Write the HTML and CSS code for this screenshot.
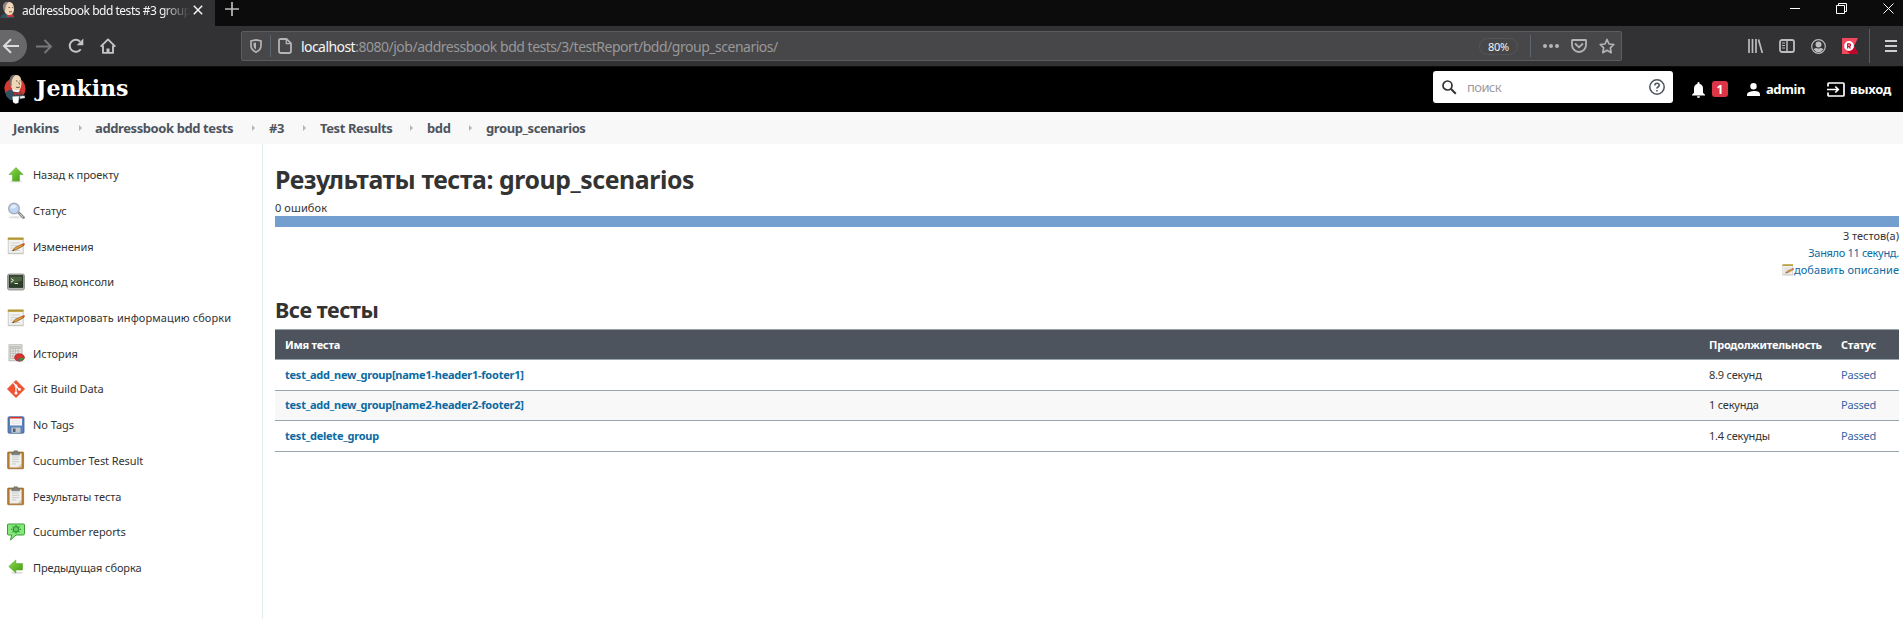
FILE: index.html
```html
<!DOCTYPE html>
<html lang="ru">
<head>
<meta charset="utf-8">
<title>addressbook bdd tests #3 group_scenarios [Jenkins]</title>
<link rel="stylesheet" href="styles.css">
</head>
<body>
<svg class="defs" width="0" height="0">
  <defs>
    <linearGradient id="green" x1="0" y1="0" x2="1" y2="1"><stop offset="0" stop-color="#8fdc4c"/><stop offset="1" stop-color="#3f9a12"/></linearGradient>
    <symbol id="butler" viewBox="0 0 22 30">
      <ellipse cx="11" cy="14.500" rx="10.600" ry="10.500" fill="#d33833"/>
      <path d="M2 18q3-3 7-2l7 1 3 4-2 4-5 1.500-6-.5-4-4z" fill="#335061"/>
      <path d="M6.500 7Q6.500 1 12 1q4.500 0 5.200 5 .9 4-.3 7.500-1 3-4.200 3Q8 17 6.500 11z" fill="#f0d6b7"/>
      <path d="M12 .8Q6 .2 5.400 6q-.8 3 1 5.500l1.300.8-.2-4Q8.300 3 12 .8z" fill="#6d6b6d"/>
      <path d="M8 14.500q3 3 8 1l-1 3-6-1z" fill="#fff"/>
      <path d="M10 18l2.500 1 4-1.300.3 3.200-3.600-.9-2.800 1.200z" fill="#d33833" stroke="#81201d" stroke-width=".4"/>
      <path d="M8.500 22.500l6.500-.3-.6 6.800-3 .8-2.400-1.500z" fill="#fff"/>
      <path d="M15.500 22.500l5-1 .5 2.500-4.500.8z" fill="#e8e8e8"/>
      <path d="M12 7h1.500M15.500 7h1M14.800 8.200l.8 2.500M12 13.200q2 .8 4-.3" fill="none" stroke="#4a3728" stroke-width=".8"/>
    </symbol>
    <symbol id="notepad" viewBox="0 0 18 18">
      <path d="M1 15.500h15.500l.3 1.700H.7z" fill="#cfcfcb"/>
      <rect x="1.200" y="1.500" width="15" height="14.700" fill="#f2f2ef" stroke="#c2c2bc" stroke-width=".8"/>
      <path d="M.8.500h15.700v2.300H.8z" fill="#b5942d"/>
      <path d="M3.500 6h9M3.500 8.500h7M3.500 11h4M3.500 13.500h9" stroke="#c8c8c4" stroke-width=".8"/>
      <path d="M5.500 13.600l2.600-3.200 7.200-3.400 1.100 2-7.200 3.700z" fill="#dc923b" stroke="#85591f" stroke-width=".6"/>
      <path d="M15.200 7l2.100-1 .5 1.800-1.500 1.100z" fill="#dc3a2c"/>
      <path d="M5.200 13.900l1.100-1.500 1 .9z" fill="#333"/>
    </symbol>
    <symbol id="clipboard" viewBox="0 0 18 20">
      <rect x=".6" y="2" width="16" height="16.800" rx=".8" fill="#b67a30" stroke="#8d5b1d" stroke-width=".6"/>
      <path d="M2.600 3.600h12v10.400l-3.600 3.600H2.600z" fill="#eeeeec"/>
      <path d="M14.600 14l-3.600 3.600h3.600z" fill="#d0d0cc"/>
      <path d="M5 7h7M5 9.300h7M5 11.600h7M5 13.900h4" stroke="#cacac7" stroke-width=".9"/>
      <path d="M4.800 4.800V2.300H7V.8h3.400v1.500h2.200v2.500z" fill="#7d817b" stroke="#5f625d" stroke-width=".5"/>
    </symbol>
  </defs>
</svg>

<div class="tabs">
  <div class="tab">
    <svg class="tab-icon" viewBox="0 0 16 17"><path d="M1.500 14l5-2 6 1.500L15 17H0z" fill="#335061"/><path d="M4 6Q4 1 9 1q4 0 4.700 4.500.8 3-.4 6-1 2.700-3.800 2.700Q5 14 4 9z" fill="#f0d6b7"/><path d="M9.500.800Q3 0 2.800 5.500q0 3.500 2.200 5l.4-3.500Q6 2.500 9.500.800z" fill="#8a8582"/><path d="M6.500 14.200l7-.7v2.800l-3-.8-3 1z" fill="#d33833"/><path d="M8.500 6.500H10M12 6.500h1M9 10.800h3" stroke="#5b4433" stroke-width=".8"/></svg>
    <span class="tab-title">addressbook bdd tests #3 group</span>
    <svg class="tab-close" viewBox="0 0 10 10"><path d="M.8.800l8.400 8.400M9.200.800L.8 9.200" stroke="#f4f4f4" stroke-width="1.500"/></svg>
  </div>
  <svg class="plus" viewBox="0 0 14 14"><path d="M7 0v14M0 7h14" stroke="#bcbcbc" stroke-width="1.700"/></svg>
  <div class="window">
    <svg width="10" height="11" viewBox="0 0 10 11"><path d="M0 5.500h10" stroke="#fff"/></svg>
    <svg width="11" height="11" viewBox="0 0 11 11" fill="none" stroke="#fff"><path d="M.5 2.500h8v8h-8zM2.500 2.500v-2h8v8h-2"/></svg>
    <svg width="11" height="11" viewBox="0 0 11 11"><path d="M.5.500l10 10M10.500.500l-10 10" stroke="#fff"/></svg>
  </div>
</div>

<div class="nav">
  <div class="back"><svg width="18" height="16" viewBox="0 0 18 16" fill="none" stroke="#dcdcdc" stroke-width="2"><path d="M17 8H2M9 1.300L2 8l7 6.700"/></svg></div>
  <svg class="forward" width="17" height="15" viewBox="0 0 17 15" fill="none" stroke="#77777a" stroke-width="1.900"><path d="M0 7.500h15M8.500 1l6.500 6.500L8.500 14"/></svg>
  <svg class="reload" width="16" height="16" viewBox="0 0 16 16"><path d="M12.700 11.200A6 6 0 1 1 12 3.600" fill="none" stroke="#c4c4c6" stroke-width="2"/><path d="M15.300.600v6.600H8.700z" fill="#c4c4c6"/></svg>
  <svg class="home" width="16" height="16" viewBox="0 0 16 16" fill="none" stroke="#c4c4c6" stroke-width="1.900"><path d="M.7 8.600L8 1.400l7.300 7.200M3 7.500v7.400h10V7.500" stroke-linejoin="round"/><path d="M8 15v-4.500" stroke-width="3"/></svg>
  <div class="urlbar">
    <svg class="shield" width="12" height="14" viewBox="0 0 12 14"><path d="M6 .9L11 2v4.500q0 4.500-5 6.600Q1 11 1 6.500V2z" fill="none" stroke="#b4b4b6" stroke-width="1.700"/><path d="M6 3.600v6.800Q3.500 9 3.500 6.500V4z" fill="#b4b4b6"/></svg>
    <i class="bar"></i>
    <svg class="page" width="14" height="16" viewBox="0 0 14 16" fill="none" stroke="#b4b4b6" stroke-width="1.800"><path d="M2.500 1h6L13 5.300V13q0 2-2 2H3q-2 0-2-2V2.500Q1 1 2.500 1z"/><path d="M8.300 1v4.600H13" stroke-width="1.300"/></svg>
    <span class="url"><b>localhost</b>:8080/job/addressbook bdd tests/3/testReport/bdd/group_scenarios/</span>
    <span class="zoom">80%</span>
    <i class="bar"></i>
    <svg class="dots" width="16" height="4" viewBox="0 0 16 4" fill="#b4b4b6"><circle cx="2" cy="2" r="2"/><circle cx="8" cy="2" r="2"/><circle cx="14" cy="2" r="2"/></svg>
    <svg class="pocket" width="16" height="14" viewBox="0 0 16 14" fill="none" stroke="#b4b4b6" stroke-width="1.800"><path d="M1.500 1h13q.5 0 .5.500V6a7 7 0 0 1-14 0V1.500q0-.5.500-.5z"/><path d="M4.500 5L8 8.300 11.500 5" stroke-linecap="round"/></svg>
    <svg class="star" width="16" height="16" viewBox="0 0 16 16" fill="none" stroke="#b4b4b6" stroke-width="1.700"><path d="M8 1.500l2 4.500 4.800.5-3.500 3.300.9 4.900L8 12.300l-4.200 2.400.9-4.900L1.200 6.500 6 6z" stroke-linejoin="round"/></svg>
  </div>
  <div class="tools">
    <svg width="15" height="14" viewBox="0 0 15 14" stroke="#bdbdbf" stroke-width="1.700"><path d="M1 0v14M4.500 0v14M8 0v14M10.500.500L14.300 14"/></svg>
    <svg width="16" height="14" viewBox="0 0 16 14" fill="none" stroke="#bdbdbf"><rect x="1" y="1" width="14" height="12" rx="2" stroke-width="1.800"/><path d="M8 1v12" stroke-width="1.500"/><path d="M3 4h3M3 6.500h3M3 9h3"/></svg>
    <svg width="15" height="15" viewBox="0 0 15 15"><circle cx="7.500" cy="7.500" r="6.800" fill="none" stroke="#bdbdbf" stroke-width="1.200"/><circle cx="7.500" cy="5.600" r="3" fill="#bdbdbf"/><path d="M2.500 10.300q1.500-1.300 3-1.300 2 1.200 4 0 1.500 0 3 1.300-2 3-5 3t-5-3z" fill="#bdbdbf"/></svg>
    <svg width="16" height="16" viewBox="0 0 16 16"><path d="M0 0h16l-4 8 4 8H0z" fill="#f0485f"/><path d="M5 13l8-4 3 7H8z" fill="#c3052b"/><circle cx="7" cy="8" r="3.900" fill="#fff" stroke="#fff" stroke-width="2"/><path d="M5.700 10.500V5.800h1.600a1.200 1.200 0 0 1 0 2.500H6M7.200 8.300l1.200 2.200" fill="none" stroke="#c3052b" stroke-width="1.200"/></svg>
  </div>
  <i class="menu-sep"></i>
  <svg class="burger" width="12" height="12" viewBox="0 0 12 12"><path d="M0 1h12M0 6h12M0 11h12" stroke="#cfcfd0" stroke-width="2"/></svg>
</div>

<header class="header">
  <svg class="logo" width="22" height="30"><use href="#butler"/></svg>
  <span class="brand">Jenkins</span>
  <div class="search">
    <svg width="15" height="15" viewBox="0 0 15 15" fill="none" stroke="#333"><circle cx="5.500" cy="5.500" r="4.500" stroke-width="1.700"/><path d="M8.800 8.800l5 5" stroke-width="2"/></svg>
    <span>поиск</span>
    <svg width="16" height="16" viewBox="0 0 16 16" fill="none" stroke="#4d545d" stroke-width="1.500"><circle cx="8" cy="8" r="7.200"/><path d="M5.800 6.500Q5.800 4.200 8 4.200t2.200 2Q10.200 7.300 9 8T8 9.700M8 11v1.600"/></svg>
  </div>
  <svg class="bell" width="13" height="16" viewBox="0 0 13 16" fill="#fff"><path d="M6.500 0q1 0 1 1v.7Q11 2.600 11 6.500v4.200l2 2v.8H0v-.8l2-2V6.500q0-3.900 3.500-4.800V1q0-1 1-1zM5 14.300h3Q8 16 6.500 16T5 14.300z"/></svg>
  <span class="badge">1</span>
  <svg class="user" width="13" height="13" viewBox="0 0 13 13" fill="#fff"><circle cx="6.500" cy="3.200" r="3.200"/><path d="M0 13v-1.500Q0 8.500 6.500 8t6.500 3.500V13z"/></svg>
  <span class="login">admin</span>
  <svg class="exit" width="18" height="15" viewBox="0 0 18 15" fill="none" stroke="#fff" stroke-width="1.700"><path d="M1 4.500V2q0-1 1-1h14q1 0 1 1v11q0 1-1 1H2q-1 0-1-1v-2.500M0 7.500h11M8.300 4.500l3 3-3 3"/></svg>
  <span class="logout">выход</span>
</header>

<nav class="crumbs">
  <span class="c1">Jenkins</span><i></i><span class="c2">addressbook bdd tests</span><i></i><span class="c3">#3</span><i></i><span class="c4">Test Results</span><i></i><span class="c5">bdd</span><i></i><span class="c6">group_scenarios</span>
</nav>

<div class="page-body">
  <aside class="side">
    <a><svg viewBox="0 0 18 18"><ellipse cx="9" cy="15.500" rx="6" ry="1" fill="#ddd"/><path d="M9 1.500l7 7h-3.500V15h-7V8.500H2z" fill="url(#green)" stroke="#5cab2b" stroke-width=".6"/></svg>Назад к проекту</a>
    <a><svg viewBox="0 0 18 18"><ellipse cx="8" cy="15.300" rx="7" ry="1.200" fill="#e4e4e4"/><path d="M11.500 10.500l5 5" stroke="#8c8f92" stroke-width="2.800" stroke-linecap="round"/><path d="M12.500 11.500l3.500 3.500" stroke="#c9cbcd" stroke-width="1"/><circle cx="7" cy="6.500" r="5.300" fill="#bcd6f4" stroke="#a9aeb8" stroke-width="1.400"/><path d="M3.500 6.500a3.500 3.500 0 0 1 6-2.500q-1 3-6 2.500z" fill="#e4effb"/></svg>Статус</a>
    <a><svg><use href="#notepad"/></svg>Изменения</a>
    <a><svg viewBox="0 0 18 18"><rect x=".5" y="1" width="17" height="16" rx="2" fill="#b4b6b1" stroke="#85877f" stroke-width=".8"/><rect x="2.200" y="2.700" width="13.600" height="11.600" fill="#2c4128" stroke="#182316" stroke-width=".8"/><path d="M3 3.500h12v4L3 11z" fill="#4c6444"/><path d="M4 5.500l2.500 1.800L4 9.200M7.500 10.500h3.500" fill="none" stroke="#e5eee0" stroke-width="1"/></svg>Вывод консоли</a>
    <a class="edit"><svg><use href="#notepad"/></svg>Редактировать информацию сборки</a>
    <a><svg viewBox="0 0 18 18"><rect x="2" y=".8" width="13" height="16" fill="#e9e9e7" stroke="#a9aba6" stroke-width=".8"/><path d="M3.500 2.500h10v2h-10zM3.500 5v10M6 5v10M8.500 5v10M11 5v5M3.500 7h10M3.500 9.500h10M3.500 12h5M3.500 14.500h5" stroke="#b5b7b2" stroke-width=".8" fill="#ccc"/><ellipse cx="12.500" cy="13.500" rx="5" ry="3.800" fill="#d93030" stroke="#a11" stroke-width=".5"/><path d="M12.500 13.500v3.700q4-.3 4.800-3.200z" fill="#4b8f35"/><path d="M12.500 13.500v3.700l-2-.5z" fill="#3d6bb0"/></svg>История</a>
    <a><svg viewBox="0 0 18 18"><path d="M9 .5L17.500 9 9 17.500.5 9z" fill="#f05133" stroke="#f05133" stroke-linejoin="round"/><path d="M6.500 3l2.500 2.500v8M9 6l3.500 3.500" fill="none" stroke="#fff" stroke-width="1.200"/><circle cx="9" cy="5.800" r="1.400" fill="#fff"/><circle cx="9" cy="13.200" r="1.400" fill="#fff"/><circle cx="12.500" cy="9.400" r="1.400" fill="#fff"/></svg>Git Build Data</a>
    <a><svg viewBox="0 0 18 18"><rect x="1" y=".8" width="16" height="16.400" rx="1.200" fill="#5a82bd" stroke="#3a5f98" stroke-width=".8"/><path d="M3 1.200h12v8.300H3z" fill="#f6f6f6"/><path d="M3 1h12v1.500H3z" fill="#dc2f2f"/><path d="M4.500 5h9M4.500 7.200h9" stroke="#ddd" stroke-width=".7"/><path d="M4.500 11.500h9v5.300h-9z" fill="#c5c8c8"/><path d="M6 12.500h2.500v3.500H6z" fill="#4c5f7c"/></svg>No Tags</a>
    <a class="lat"><svg class="tall"><use href="#clipboard"/></svg>Cucumber Test Result</a>
    <a class="lat"><svg class="tall"><use href="#clipboard"/></svg>Результаты теста</a>
    <a class="lat"><svg viewBox="0 0 18 18"><path d="M1.500 1h15q1 0 1 1v8.500q0 1.500-1.500 1.500H9l-5.500 5 1.200-5H1.500Q.5 12 .5 11V2q0-1 1-1z" fill="#86e77b" stroke="#3a9c38" stroke-width="1"/><circle cx="9" cy="6.300" r="2.600" fill="#6fc95f" stroke="#2c9a3a" stroke-width="1.200"/><path d="M9 2v1.500M9 9v1.500M4 6.300h1.500M12.500 6.300H14M5.500 3.300l1 1M12.500 3.300l-1 1M5.500 9.300l1-1M12.500 9.300l-1-1" stroke="#2c9a3a" stroke-width="1.200"/></svg>Cucumber reports</a>
    <a class="lat"><svg viewBox="0 0 18 18"><ellipse cx="10" cy="14.800" rx="6" ry="1" fill="#ddd"/><path d="M1.800 8.500l7-6.500v3.500h6.700v6.500H8.800V15z" fill="url(#green)" stroke="#5cab2b" stroke-width=".6"/></svg>Предыдущая сборка</a>
  </aside>

  <main class="main">
    <h1>Результаты теста: group_scenarios</h1>
    <div class="failures">0 ошибок</div>
    <div class="result-bar"></div>
    <div class="summary">
      <div>3 тестов(а)</div>
      <div class="took">Заняло 11 секунд.</div>
      <div class="desc"><svg width="12" height="12"><use href="#notepad"/></svg><span>добавить описание</span></div>
    </div>
    <h2>Все тесты</h2>
    <table>
      <thead><tr><th>Имя теста</th><th class="dur">Продолжительность</th><th class="stat">Статус</th></tr></thead>
      <tbody>
        <tr><td class="name">test_add_new_group[name1-header1-footer1]</td><td>8.9 секунд</td><td class="passed">Passed</td></tr>
        <tr class="odd"><td class="name">test_add_new_group[name2-header2-footer2]</td><td>1 секунда</td><td class="passed">Passed</td></tr>
        <tr><td class="name">test_delete_group</td><td>1.4 секунды</td><td class="passed">Passed</td></tr>
      </tbody>
    </table>
  </main>
</div>
</body>
</html>
```
FILE: styles.css
```css
* { box-sizing: border-box; }
body {
  margin: 0;
  height: 619px;
  overflow: hidden;
  display: flex;
  flex-direction: column;
  background: #fff;
  color: #333;
  font: 11px/17px "Noto Sans", sans-serif;
}
.defs { position: absolute; }
svg { flex: none; display: block; }
span { white-space: nowrap; }

/* Browser tab strip */
.tabs { height: 26px; flex: none; display: flex; background: #0c0c0d; }
.tab { width: 215px; height: 26px; display: flex; align-items: flex-start; background: #323234; }
.tab-icon { width: 16px; height: 17px; margin: 1px 0 0; }
.tab-title {
  width: 170px;
  margin-left: 6px;
  padding-top: 1px;
  color: #f6f6f6;
  font-size: 12px;
  line-height: 20px;
  letter-spacing: -.48px;
  -webkit-mask-image: linear-gradient(90deg, #000 140px, transparent 168px);
  mask-image: linear-gradient(90deg, #000 140px, transparent 168px);
}
.tab-close { width: 10px; height: 10px; margin: 5px 0 0 1px; }
.plus { width: 14px; height: 14px; margin: 2px 0 0 10px; }
.window { margin: 3px 9px 0 auto; display: flex; gap: 36px; }

/* Browser toolbar */
.nav { height: 41px; flex: none; display: flex; align-items: center; background: #323234; border-bottom: 1px solid #0c0c0d; }
.back { width: 27px; height: 32px; display: flex; align-items: center; padding-left: 2px; border-radius: 0 16px 16px 0; background: #68686a; }
.forward { margin-left: 9px; }
.reload { margin-left: 15px; }
.home { margin-left: 16px; }
.urlbar { width: 1381px; height: 30px; margin-left: 125px; display: flex; align-items: center; border: 1px solid #5c5c5f; border-radius: 2px; background: #474749; }
.shield { margin-left: 8px; }
.bar { width: 1px; height: 22px; margin-left: 8px; background: #5d666f; }
.page { margin-left: 7px; }
.url { margin-left: 9px; color: #98989a; font-size: 14px; line-height: 20px; letter-spacing: -.48px; padding-top: 1px; }
.url b { color: #f5f5f6; font-weight: 400; letter-spacing: -.56px; }
.zoom { margin-left: auto; width: 39px; height: 17px; border: 1px solid #555558; border-radius: 9px; color: #f0f0f0; text-align: center; line-height: 15px; letter-spacing: -.2px; }
.zoom + .bar { margin-left: 12px; }
.dots { margin-left: 12px; }
.pocket { margin-left: 12px; }
.star { margin: 0 6px 0 12px; }
.tools { margin-left: 126px; display: flex; align-items: center; gap: 16px; }
.menu-sep { width: 1px; height: 34px; margin-left: 11px; background: #5a5a5d; }
.burger { margin-left: 15px; }

/* Jenkins header */
.header { height: 45px; flex: none; display: flex; align-items: center; background: #000; color: #fff; font-weight: 700; font-size: 13px; }
.logo { margin: -1px 0 0 4px; }
.brand { margin: -3px 0 0 10px; font: 700 22px/30px "DejaVu Serif", serif; }
.search { width: 240px; height: 32px; margin: -5px 0 0 auto; padding: 0 8px 0 9px; display: flex; align-items: center; border-radius: 3px; background: #fff; color: #9b9ba0; font-weight: 400; }
.search span { margin: 1px auto 0 10px; letter-spacing: -.6px; }
.bell { margin-left: 19px; }
.badge { width: 16px; height: 16px; margin: -1px 0 0 7px; border-radius: 3px; background: #dc3545; text-align: center; font-size: 12px; line-height: 17px; }
.user { margin-left: 19px; }
.login { margin-left: 6px; letter-spacing: -.4px; }
.exit { margin-left: 22px; }
.logout { width: 41px; margin: 0 12px 0 5px; letter-spacing: -.27px; }

/* Breadcrumbs */
.crumbs { height: 32px; flex: none; display: flex; align-items: center; padding-left: 13px; background: #f8f8f8; color: #4d545d; font-size: 13px; font-weight: 700; letter-spacing: -.4px; }
.crumbs i { margin: 0 14px 0 20px; border: solid transparent; border-width: 3px 0 3px 3px; border-left-color: #b4b4b4; }
.c1 { width: 46px; letter-spacing: -.2px; }
.c2 { width: 137px; }
.c3 { width: 14px; }
.c4 { width: 70px; }
.c5 { width: 22px; }
.crumbs .c1 + i { margin-right: 13px; }

/* Sidebar */
.page-body { flex: 1; display: flex; min-height: 0; }
.side { width: 263px; flex: none; padding-top: 13px; border-right: 1px solid #e6edee; }
.side a { height: 35.7px; padding-left: 7px; display: flex; align-items: center; gap: 8px; letter-spacing: -.05px; }
.side svg { width: 18px; height: 18px; }
.side .tall { height: 20px; }
.side .edit { letter-spacing: .1px; }
.side .lat { letter-spacing: -.1px; }

/* Results */
.main { flex: 1; padding: 15px 4px 0 12px; }
h1 { margin: 0 0 1px; font-size: 24.8px; line-height: 40px; letter-spacing: -.41px; }
.failures { line-height: 16px; letter-spacing: .1px; }
.result-bar { height: 11px; background: #729fcf; }
.summary { text-align: right; }
.took { color: #0b6aa2; letter-spacing: -.33px; }
.desc { display: flex; justify-content: flex-end; align-items: center; color: #0b6aa2; letter-spacing: .05px; }
h2 { margin: 16px 0 0; font-size: 21.5px; line-height: 32px; letter-spacing: -.4px; }
table { width: 100%; margin-top: 3px; border-collapse: separate; border-spacing: 0; table-layout: fixed; }
th, td { height: 31px; padding: 0 0 0 10px; border-bottom: 1px solid #98a5ab; text-align: left; line-height: 16px; letter-spacing: -.2px; }
th { border-top: 1px solid #98a5ab; background: #4d545d; color: #fff; letter-spacing: -.24px; }
td { padding-bottom: 1px; }
.dur { width: 132px; }
.stat { width: 68px; }
.odd td { height: 30px; background: #f8f8f8; }
.name { color: #0b6aa2; font-weight: 700; letter-spacing: -.24px; }
.passed { color: #3465a4; }
```
